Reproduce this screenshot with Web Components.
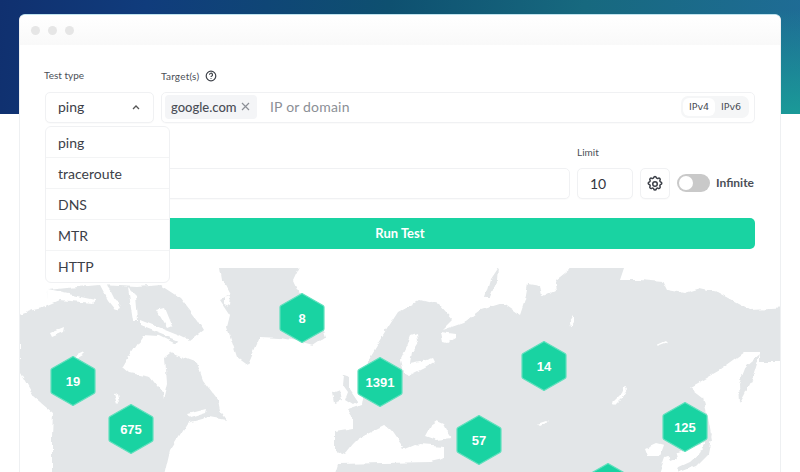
<!DOCTYPE html>
<html>
<head>
<meta charset="utf-8">
<title>Network test</title>
<style>
  html, body { margin: 0; height: 100%; }
  body { overflow: hidden; }
</style>
</head>
<body>
<app-page>
  <test-form></test-form>
  <world-map></world-map>
</app-page>

<script>
const FONT = '"Lato", "Noto Sans", sans-serif';

// page: gradient band behind the window
class AppPage extends HTMLElement {
  constructor() {
    super();
    this.attachShadow({ mode: 'open' }).innerHTML = `
      <style>
        :host {
          display: block; height: 472px; box-sizing: border-box; overflow: hidden;
          padding: 14px 19px 0;
          font-family: ${FONT}; color: #3c4048;
          background:
            radial-gradient(ellipse 320px 105px at 100% 100%, #1a9a98 0%, rgba(26,154,152,0) 100%) top / 100% 114px no-repeat,
            linear-gradient(96deg, #10306f 0%, #103c7c 18%, #0e5070 48%, #17697f 72%, #1f6c96 100%) top / 100% 114px no-repeat,
            #fff;
        }
        .window {
          height: 100%; box-sizing: border-box; overflow: hidden;
          background: #fff; border: 1px solid #eef0f2; border-top-color: #bfe3ee; border-bottom: 0;
          border-radius: 6px 6px 0 0;
        }
        .bar {
          height: 30px; display: flex; align-items: center; gap: 8px; padding-left: 11px;
          background: linear-gradient(#fff, #f9f9f9);
        }
        .bar i { width: 9px; height: 9px; border-radius: 50%; background: #e6e6e6; }
      </style>
      <div class="window">
        <div class="bar"><i></i><i></i><i></i></div>
        <slot></slot>
      </div>`;
  }
}

class TestForm extends HTMLElement {
  constructor() {
    super();
    const items = ['ping', 'traceroute', 'DNS', 'MTR', 'HTTP'];
    this.attachShadow({ mode: 'open' }).innerHTML = `
      <style>
        :host { display: block; position: relative; height: 223px; box-sizing: border-box; padding: 24px 25px 0; }
        label { font-size: 10px; line-height: 12px; color: #4b4f57; display: flex; align-items: center; gap: 6px; }
        .row { display: flex; gap: 7px; }
        .box {
          box-sizing: border-box; height: 31px; background: #fff;
          border: 1px solid #f0f1f3; border-radius: 5px;
          box-shadow: 0 1px 1px rgba(0,0,0,.02);
          display: flex; align-items: center; font-size: 14px;
        }
        .type { width: 109px; }
        .type label, .target label { height: 12px; margin-bottom: 11px; }
        .type label { margin-left: -1px; }
        .type .box { padding: 0 13px 0 12px; justify-content: space-between; }
        .type .box span, .target .box > * { position: relative; top: -1px; }
        .target { flex: 1; }
        .target label { letter-spacing: .2px; position: relative; top: 1px; }
        .target .box { padding: 0 5px 0 3px; }
        .chip {
          height: 24px; width: 92px; box-sizing: border-box; background: #f4f5f7; border-radius: 4px;
          display: flex; align-items: center; justify-content: space-between; padding: 0 7px 0 6px;
          font-size: 13px; color: #4a4e56; font-weight: 500;
        }
        .placeholder { margin-left: 13px; color: #8b8f96; flex: 1; letter-spacing: .2px; }
        .ip {
          display: flex; box-sizing: border-box; width: 68px; height: 22px; padding: 2px; align-items: center; border-radius: 7px; background: #f5f6f7;
          font: 9.5px "DejaVu Sans", sans-serif; color: #4a4e56;
        }
        .ip span { flex: 1; text-align: center; line-height: 18px; height: 18px; border-radius: 6px; }
        .ip .on { background: #fff; }

        .second { margin-top: 23px; align-items: flex-end; }
        .field { flex: 1; }
        .limit { width: 56px; }
        .limit label { height: 12px; margin-bottom: 10px; }
        .limit .box { padding-left: 12px; color: #33373e; }
        .gear { width: 30px; justify-content: center; color: #3c4048; }
        .toggle { width: 33px; height: 18px; margin: 0 0 7px 0; border-radius: 9px; background: #c9c9c9; padding: 2px; box-sizing: border-box; }
        .toggle i { display: block; width: 14px; height: 14px; border-radius: 50%; background: #fff; }
        .inf { width: 39px; font-size: 12px; font-weight: 700; color: #4b4f57; margin: 0 0 9px -1px; line-height: 14px; white-space: nowrap; }

        button {
          display: block; width: 100%; height: 31px; margin-top: 19px; border: 0; border-radius: 5px;
          background: #19d3a2; color: #fff; font: 700 13px ${FONT}; padding: 0 0 2px;
        }
        .menu {
          position: absolute; left: 25px; top: 81px; width: 125px; box-sizing: border-box; z-index: 2;
          background: #fff; border: 1px solid #f0f1f3; border-radius: 6px;
        }
        .menu div {
          height: 31px; box-sizing: border-box; padding-left: 12px; display: flex; align-items: center;
          font-size: 14px; color: #3c4048; border-bottom: 1px solid #f3f4f5;
        }
        .menu div:last-child { border-bottom: 0; }
      </style>
      <div class="row">
        <div class="type">
          <label>Test type</label>
          <div class="box"><span>ping</span>
            <svg width="8" height="5" viewBox="0 0 8 5" fill="none" stroke="#555" stroke-width="1.3"><path d="M1 4l3-3 3 3"/></svg>
          </div>
        </div>
        <div class="target">
          <label>Target(s)
            <svg width="12" height="12" viewBox="0 0 12 12" fill="none" stroke="#3f434a" stroke-width="1.2"><circle cx="6" cy="6" r="4.8"/><path d="M4.5 4.8a1.5 1.5 0 1 1 2.3 1.2c-.5.3-.8.6-.8 1.1"/><path d="M6 8.3v.8"/></svg>
          </label>
          <div class="box">
            <div class="chip">google.com
              <svg width="9" height="9" viewBox="0 0 9 9" stroke="#8b8f96" stroke-width="1.2"><path d="M1 1l7 7M8 1L1 8"/></svg>
            </div>
            <div class="placeholder">IP or domain</div>
            <div class="ip"><span class="on">IPv4</span><span>IPv6</span></div>
          </div>
        </div>
      </div>
      <div class="row second">
        <div class="field"><div class="box"></div></div>
        <div class="limit"><label>Limit</label><div class="box">10</div></div>
        <div class="box gear">
          <svg width="18" height="18" viewBox="0 0 24 24" fill="none" stroke="currentColor" stroke-width="2" stroke-linejoin="round"><path d="M10.3 3.3a1.75 1.75 0 0 1 3.4 0 1.75 1.75 0 0 0 2.6 1.1 1.75 1.75 0 0 1 2.4 2.4 1.75 1.75 0 0 0 1 2.5 1.75 1.75 0 0 1 0 3.4 1.75 1.75 0 0 0-1 2.6 1.75 1.75 0 0 1-2.4 2.4 1.75 1.75 0 0 0-2.6 1 1.75 1.75 0 0 1-3.4 0 1.75 1.75 0 0 0-2.6-1 1.75 1.75 0 0 1-2.4-2.4 1.75 1.75 0 0 0-1-2.6 1.75 1.75 0 0 1 0-3.4 1.75 1.75 0 0 0 1-2.5 1.75 1.75 0 0 1 2.4-2.4 1.75 1.75 0 0 0 2.6-1.1z"/><circle cx="12" cy="12" r="3"/></svg>
        </div>
        <div class="toggle"><i></i></div>
        <div class="inf">Infinite</div>
      </div>
      <button>Run Test</button>
      <div class="menu">${items.map(t => `<div>${t}</div>`).join('')}</div>`;
  }
}

// map pins go on a free canvas, so they are absolutely placed
class MapPin extends HTMLElement {
  constructor() {
    super();
    this.attachShadow({ mode: 'open' }).innerHTML = `
      <style>
        :host {
          position: absolute; width: 48px; height: 52px; margin: -26px 0 0 -24px;
          display: flex; align-items: center; justify-content: center;
          font: 700 13px "Liberation Sans", sans-serif; color: #fff;
        }
        svg { position: absolute; inset: 0; }
        span { position: relative; }
      </style>
      <svg viewBox="0 0 48 52"><path d="M24 1.5 45 13.5a2 2 0 0 1 1 1.8V36.7a2 2 0 0 1-1 1.8L24 50.5 3 38.5a2 2 0 0 1-1-1.8V15.3a2 2 0 0 1 1-1.8z" fill="#19d3a2" stroke="#5fe0bd" stroke-width="1.2" stroke-linejoin="round"/></svg>
      <span><slot></slot></span>`;
  }
  connectedCallback() {
    this.style.left = (this.getAttribute('x') - 20) + 'px';
    this.style.top = (this.getAttribute('y') - 268) + 'px';
  }
}

// land first, then seas painted white on top, all roughened by the filter
class WorldMap extends HTMLElement {
  constructor() {
    super();
    const pins = [[302,318,8],[73,381,19],[131,429,675],[380,382,1391],[544,366,14],[479,440,57],[685,427,125],[608,488,'']];
    const land = [
      // greenland
      'M217 250H307L293 280 300 295 318 315 325 337 313 345 302 342 280 338 260 337 248 365 237 357 227 327 230 315 220 300 230 295 222 280z',
      // north america
      'M20 315 33 310 47 307 48 290 67 288 100 285 137 287 160 285 180 298 197 320 203 330 190 340 180 335 170 353 197 363 203 380 218 400 220 410 227 420 210 417 187 423 170 450 163 480H52L52 437 53 413 33 396 20 373z',
      // uk, ireland
      'M344 375 350 377 350 390 358 402 353 405 345 400 348 392 343 385z',
      'M332 393 340 390 342 400 334 403z',
      // novaya zemlya
      'M498 268 490 280 485 297 490 297 497 280z',
      // eurasia
      'M370 357 387 329 398 312 420 300 440 305 453 320 443 330 463 323 480 310 503 303 520 315 525 300 528 283 540 285 542 297 557 290 555 280 570 268 577 250H630L620 280 640 280 663 282 667 290 683 293 700 288 717 292 750 310 790 308V362L760 362 760 352 745 352 720 370 690 387 703 397 708 417 712 440 680 452 665 457 657 480H333L338 464 430 462 443 459 430 446 414 444 402 449 385 425 375 430 358 439 353 444 345 454 335 450 335 432 353 429 353 419 347 410 362 405z',
      // sakhalin
      'M760 354 752 380 744 396 740 403 739 384 746 366z',
      // korea, japan
      'M666 446 674 444 678 458 670 461z',
      'M677 468 690 462 700 453 708 436 712 433 708 454 696 466 680 472z'
    ];
    const seas = [
      // hudson bay
      'M143 335 133 350 123 367 130 373 150 377 162 392 163 400 167 383 165 357 170 353 178 345 160 336z',
      // arctic channels
      'M100 285 108 300 116 310 120 308 112 292 106 284z',
      'M128 288 133 320 138 320 136 296z',
      'M157 310 167 327 172 325 165 308z',
      'M48 290 96 300 92 303 60 300 46 306z',
      'M140 320 190 340 186 344 140 326z',
      // canadian lakes and gulf
      'M50 333 65 327 64 332 52 337z',
      'M75 356 84 352 83 355 76 359z',
      'M114 394 117 393 119 402 117 404z',
      'M187 414 207 409 206 413 190 418z',
      // greenland fjord
      'M224 298 230 296 229 306 224 304z',
      // baltic
      'M417 334 411 336 407 346 400 360 403 372 410 375 424 368 434 362 432 358 420 362 410 364 412 352 418 342z',
      // white sea
      'M441 332 456 334 456 338 447 343 443 342z',
      // black sea
      'M425 436 431 425 437 421 444 424 448 432 452 438 436 440z',
      // adriatic and mediterranean
      'M385 425 391 430 403 447 397 448 384 433z',
      'M345 456 358 446 376 436 386 448 402 458 414 450 420 444 444 446 444 458 430 461 345 462z',
      // siberian lakes and rivers
      'M613 402 622 393 625 386 627 390 622 398 615 405z',
      'M537 424 546 421 548 422 540 426z',
      'M570 322 574 316 574 322 571 327z',
      'M657 344 666 340 668 342 660 345z',
      // yellow sea
      'M645 448 656 443 664 445 660 456 648 456z'
    ];
    this.attachShadow({ mode: 'open' }).innerHTML = `
      <style>
        :host { display: block; position: relative; height: 204px; overflow: hidden; }
        svg { display: block; }
      </style>
      <svg width="760" height="204" viewBox="20 268 760 204">
        <defs>
          <filter id="rough" x="-5%" y="-20%" width="110%" height="140%" color-interpolation-filters="sRGB">
            <feTurbulence type="fractalNoise" baseFrequency="0.09" numOctaves="3" seed="4"/>
            <feDisplacementMap in="SourceGraphic" scale="5" xChannelSelector="R" yChannelSelector="G"/>
            <feGaussianBlur stdDeviation="0.4"/>
          </filter>
        </defs>
        <g filter="url(#rough)">
          <path fill="#e3e6e8" d="${land.join('')}"/>
          <path fill="#fff" d="${seas.join('')}"/>
        </g>
      </svg>
      ${pins.map(p => `<map-pin x="${p[0]}" y="${p[1]}">${p[2]}</map-pin>`).join('')}`;
  }
}

customElements.define('app-page', AppPage);
customElements.define('test-form', TestForm);
customElements.define('map-pin', MapPin);
customElements.define('world-map', WorldMap);
</script>
</body>
</html>
